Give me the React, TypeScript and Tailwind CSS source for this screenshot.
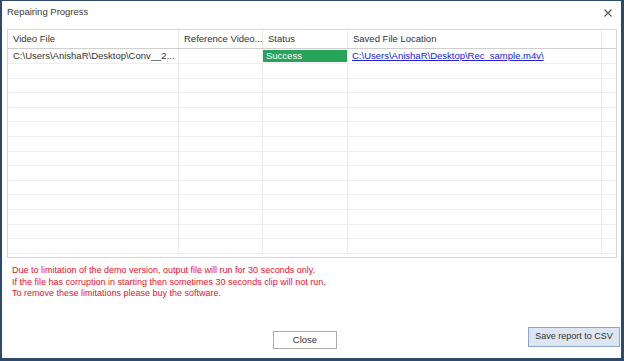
import React from "react";

type Col = {
    title: string;
    width: string;
};

const columns: Col[] = [
    { title: "Video File", width: "w-[171px]" },
    { title: "Reference Video...", width: "w-[84px]" },
    { title: "Status", width: "w-[85px]" },
    { title: "Saved File Location", width: "w-[254px]" },
];

const emptyRows = Array.from({ length: 13 });

function GridRow({ children }: { children?: React.ReactNode }) {
    return <div className="flex h-[14.6px] border-b border-[#efefef]">{children}</div>;
}

function Cell({ width, children, last }: { width: string; children?: React.ReactNode; last?: boolean }) {
    return (
        <div className={`${width} shrink-0 h-full overflow-hidden ${last ? "" : "border-r border-[#ececec]"}`}>
            {children}
        </div>
    );
}

export default function App() {
    return (
        <div
            className="w-[624px] h-[361px] bg-white border-[#2d4a6c] border-l-2 border-r-[3px] border-b-[3px] border-t flex flex-col text-[#222]"
            style={{ fontFamily: '"Liberation Sans", Arial, sans-serif' }}
        >
            {/* title bar */}
            <div className="h-[23px] flex items-center justify-between pl-[5px] pr-[9px] shrink-0">
                <span className="text-[9.5px] text-[#3a3a3a]">Repairing Progress</span>
                <svg width="8" height="8" viewBox="0 0 8 8" className="mt-[1px]">
                    <path d="M0.5 0.5 L7.5 7.5 M7.5 0.5 L0.5 7.5" stroke="#555" strokeWidth="1.1" />
                </svg>
            </div>

            {/* results grid */}
            <div className="ml-[5px] mt-[5px] w-[610px] h-[229px] border border-[#d6d6d6] overflow-hidden shrink-0 text-[9.5px]">
                <div className="flex h-[19px] border-b border-[#cfcfcf]">
                    {columns.map((c) => (
                        <Cell key={c.title} width={c.width}>
                            <div className="h-full flex items-center px-[5px] whitespace-nowrap text-[#333]">{c.title}</div>
                        </Cell>
                    ))}
                    <Cell width="flex-1" last />
                </div>
                <div className="flex h-[15px] border-b border-[#efefef]">
                    <Cell width={columns[0].width}>
                        <div className="h-full flex items-center px-[5px] whitespace-nowrap text-[#333]">C:\Users\AnishaR\Desktop\Conv__2...</div>
                    </Cell>
                    <Cell width={columns[1].width} />
                    <Cell width={columns[2].width}>
                        <div className="h-full flex items-center px-[3px] bg-[#27a35a] text-white border-y border-white">Success</div>
                    </Cell>
                    <Cell width={columns[3].width}>
                        <div className="h-full flex items-center px-[4px] whitespace-nowrap text-[#2020dd] underline">C:\Users\AnishaR\Desktop\Rec_sample.m4v\</div>
                    </Cell>
                    <Cell width="flex-1" last />
                </div>
                {emptyRows.map((_, i) => (
                    <GridRow key={i}>
                        {columns.map((c) => (
                            <Cell key={c.title} width={c.width} />
                        ))}
                        <Cell width="flex-1" last />
                    </GridRow>
                ))}
            </div>

            {/* demo notice */}
            <div className="ml-[10px] mt-[7px] text-[9px] leading-[11.5px] text-[#e8112d]">
                <p>Due to limitation of the demo version, output file will run for 30 seconds only.</p>
                <p>If the file has corruption in starting then sometimes 30 seconds clip will not run.</p>
                <p>To remove these limitations please buy the software.</p>
            </div>

            {/* buttons */}
            <div className="mt-auto mb-[9px] flex items-start">
                <button className="ml-[271px] mt-[4px] w-[64px] h-[18px] border border-[#adadad] bg-white text-[9.5px] text-[#333]">
                    Close
                </button>
                <button className="ml-auto mr-[1px] w-[92px] h-[20px] border border-[#8aa6cc] bg-[#dce5f1] text-[9px] text-[#333] whitespace-nowrap">
                    Save report to CSV
                </button>
            </div>
        </div>
    );
}
